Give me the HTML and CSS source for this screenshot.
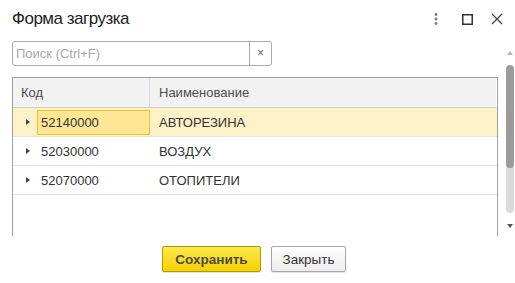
FILE: index.html
```html
<!DOCTYPE html>
<html lang="ru">
<head>
  <meta charset="UTF-8">
  <title>Форма загрузка</title>
  <link rel="stylesheet" href="styles.css">
</head>
<body>

  <!-- заголовок формы -->
  <div class="titlebar">
    <h1 class="title">Форма загрузка</h1>
    <div class="title-tools">
      <span class="tool tool-more">
        <svg width="4" height="12" viewBox="0 0 4 12"><circle cx="2" cy="1.5" r="1.4" fill="#777"/><circle cx="2" cy="6" r="1.4" fill="#777"/><circle cx="2" cy="10.5" r="1.4" fill="#777"/></svg>
      </span>
      <span class="tool">
        <svg width="11" height="11" viewBox="0 0 11 11"><rect x="0.75" y="0.75" width="9.5" height="9.5" fill="none" stroke="#333" stroke-width="1.5"/></svg>
      </span>
      <span class="tool">
        <svg width="12" height="12" viewBox="0 0 12 12"><path d="M1 1L11 11M11 1L1 11" stroke="#444" stroke-width="1.3"/></svg>
      </span>
    </div>
  </div>

  <!-- содержимое формы -->
  <div class="form-body">
    <div class="main">
      <div class="search">
        <input class="search-input" type="text" placeholder="Поиск (Ctrl+F)">
        <span class="search-clear">×</span>
      </div>

      <div class="grid">
        <div class="grid-head">
          <div class="cell cell-code">Код</div>
          <div class="cell cell-name">Наименование</div>
        </div>
        <div class="grid-row selected">
          <div class="cell cell-code"><span class="expander"></span><span class="code current">52140000</span></div>
          <div class="cell cell-name">АВТОРЕЗИНА</div>
        </div>
        <div class="grid-row">
          <div class="cell cell-code"><span class="expander"></span><span class="code">52030000</span></div>
          <div class="cell cell-name">ВОЗДУХ</div>
        </div>
        <div class="grid-row">
          <div class="cell cell-code"><span class="expander"></span><span class="code">52070000</span></div>
          <div class="cell cell-name">ОТОПИТЕЛИ</div>
        </div>
      </div>
    </div>

    <!-- полоса прокрутки формы -->
    <div class="scrollbar">
      <span class="scroll-up"></span>
      <div class="scroll-track"><div class="scroll-thumb"></div></div>
      <span class="scroll-down"></span>
    </div>
  </div>

  <!-- кнопки -->
  <div class="footer">
    <button class="btn btn-default">Сохранить</button>
    <button class="btn btn-close">Закрыть</button>
  </div>

</body>
</html>
```

FILE: styles.css
```css
body {
  font-family: "Liberation Sans", Arial, sans-serif;
  background-color: #fff;
  color: #333;
  margin: 0;
  width: 515px;
  height: 283px;
  overflow: hidden;
}
/* заголовок */
.titlebar {
  display: flex;
  align-items: center;
  justify-content: space-between;
  height: 38px;
  padding-left: 12px;
  padding-right: 3px;
}
.title {
  margin: 0;
  font-size: 17px;
  letter-spacing: -0.5px;
  font-weight: normal;
  line-height: 22px;
  color: #222;
}
.title-tools {
  display: flex;
  align-items: center;
}
.tool {
  display: flex;
  align-items: center;
  justify-content: center;
  width: 30px;
  height: 22px;
}
.tool-more {
  width: 33px;
}
/* тело формы */
.form-body {
  display: flex;
  height: 200px;
}
.main {
  padding-left: 12px;
  padding-top: 3px;
  width: 486px;
}
/* поиск */
.search {
  display: flex;
  width: 260px;
  height: 25px;
  box-sizing: border-box;
  border: 1px solid #a9a9a9;
  border-radius: 3px;
}
.search-input {
  flex: 1;
  min-width: 0;
  border: none;
  outline: none;
  padding: 0 3px;
  font-family: inherit;
  font-size: 13px;
  color: #333;
  background: transparent;
}
.search-input::placeholder {
  color: #a8a8a8;
}
.search-clear {
  width: 21px;
  border-left: 1px solid #a9a9a9;
  text-align: center;
  line-height: 22px;
  font-size: 12px;
  color: #666;
}
/* таблица */
.grid {
  margin-top: 11px;
  height: 159px;
  box-sizing: border-box;
  border: 1px solid #a0a0a0;
  border-bottom: none;
  font-size: 13px;
}
.grid-head,
.grid-row {
  display: grid;
  grid-template-columns: 137px 1fr;
}
.grid-head {
  height: 29px;
  background-color: #f2f2f2;
  border-bottom: 1px solid #d0d0d0;
  border-right: 1px solid #fff;
  color: #4d4d4d;
}
.grid-head .cell-code {
  border-right: 1px solid #d9d9d9;
  padding-left: 8px;
}
.grid-row {
  height: 28px;
  border-bottom: 1px solid #e4e4e4;
}
.cell {
  display: flex;
  align-items: center;
}
.cell-name {
  padding-left: 9px;
}
.selected {
  background-color: #fdf2c7;
}
.expander {
  width: 24px;
  height: 100%;
  display: flex;
  align-items: center;
  padding-left: 13px;
  box-sizing: border-box;
}
.expander::before {
  content: "";
  border-left: 4px solid #444;
  border-top: 3px solid transparent;
  border-bottom: 3px solid transparent;
}
.code {
  flex: 1;
  align-self: stretch;
  display: flex;
  align-items: center;
  padding-left: 3px;
  margin: 2px 0 1px 0;
  border: 1px solid transparent;
}
.current {
  background-color: #fde797;
  border-color: #f4c22b;
}
/* полоса прокрутки */
.scrollbar {
  display: flex;
  flex-direction: column;
  align-items: center;
  width: 9px;
  margin-left: 7px;
  padding-top: 13px;
}
.scroll-up,
.scroll-down {
  width: 0;
  height: 0;
  border-left: 3px solid transparent;
  border-right: 3px solid transparent;
}
.scroll-up {
  border-bottom: 4px solid #b5b5b5;
}
.scroll-down {
  margin-top: 11px;
  border-top: 4px solid #555;
}
.scroll-track {
  margin-top: 10px;
  width: 8px;
  height: 148px;
  border-radius: 4px;
  background-color: #dadada;
  overflow: hidden;
}
.scroll-thumb {
  height: 103px;
  border-radius: 4px;
  background-color: #9b9b9b;
}
/* кнопки */
.footer {
  display: flex;
  justify-content: center;
  gap: 10px;
  padding-top: 8px;
  padding-right: 7px;
}
.btn {
  height: 26px;
  padding: 0;
  font-family: inherit;
  font-size: 13.5px;
  color: #333;
  background: linear-gradient(#fff, #ececec);
  border: 1px solid #a6a6a6;
  border-radius: 2px;
  box-shadow: 0 1px 1px rgba(0,0,0,0.12);
}
.btn-default {
  width: 99px;
  font-weight: bold;
  color: #4a4a4a;
  background: linear-gradient(#ffe84d, #f5d200);
  border-color: #b39a00;
}
.btn-close {
  width: 75px;
}
```
